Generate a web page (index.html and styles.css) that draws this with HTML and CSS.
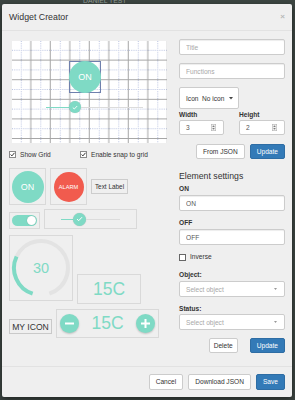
FILE: index.html
```html
<!DOCTYPE html>
<html>
<head>
<meta charset="utf-8">
<link rel="stylesheet" href="styles.css">
</head>
<body>
<div class="behind">DANIEL TEST</div>
<div class="modal">
  <div class="modal-header">
    <h4 class="title">Widget Creator</h4>
    <span class="close">×</span>
  </div>
  <div class="modal-body">
    <div class="col-left">
      <div class="canvas">
        <svg class="grid" width="155" height="102" viewBox="0 0 155 102">
          <defs>
            <pattern id="gp" width="19.5" height="19.6" patternUnits="userSpaceOnUse">
              <path d="M9.3 0V19.6M0 9.3H19.5" stroke="#b7c1e0" stroke-width="1" stroke-dasharray="1 1.2" fill="none"/>
              <path d="M18.8 0V19.6M0 19H19.5" stroke="#a6a6a6" stroke-width="1" fill="none"/>
            </pattern>
          </defs>
          <rect width="155" height="102" fill="url(#gp)"/>
        </svg>
        <div class="placed sel"><div class="circle teal on-big">ON</div></div>
        <div class="placed grid-slider">
          <div class="slider">
            <span class="fill f-grid"></span>
            <span class="knob"><svg width="6" height="5" viewBox="0 0 6 5"><path d="M0.8 2.6L2.3 4L5.2 1" stroke="#fff" stroke-width="0.9" fill="none"/></svg></span>
            <span class="rest"></span>
          </div>
        </div>
      </div>
      <div class="options">
        <label class="chk first"><span class="cbox"><svg width="7" height="7" viewBox="0 0 7 7"><rect x="0.5" y="0.5" width="6" height="6" fill="#fff" stroke="#8a8a8a"/><path d="M1.6 3.5L2.9 4.9L5.5 1.8" stroke="#333" stroke-width="1" fill="none"/></svg></span>Show Grid</label>
        <label class="chk"><span class="cbox"><svg width="7" height="7" viewBox="0 0 7 7"><rect x="0.5" y="0.5" width="6" height="6" fill="#fff" stroke="#8a8a8a"/><path d="M1.6 3.5L2.9 4.9L5.5 1.8" stroke="#333" stroke-width="1" fill="none"/></svg></span>Enable snap to grid</label>
      </div>
      <div class="palette">
        <div class="prow r1">
          <div class="cell sq"><div class="circle teal on-pal">ON</div></div>
          <div class="cell sq"><div class="circle red alarm">ALARM</div></div>
          <div class="cell text-label">Text Label</div>
        </div>
        <div class="prow r2">
          <div class="cell toggle-cell"><div class="toggle"><span class="tknob"></span></div></div>
          <div class="cell slider-cell">
            <div class="slider s-pal">
              <span class="fill f-pal"></span>
              <span class="knob big"><svg width="7" height="6" viewBox="0 0 7 6"><path d="M1 3.1L2.7 4.7L6 1.2" stroke="#fff" stroke-width="1" fill="none"/></svg></span>
              <span class="rest"></span>
            </div>
          </div>
        </div>
        <div class="prow r3">
          <div class="cell gauge">
            <svg width="62" height="64" viewBox="0 0 62 64">
              <path d="M6.57 20.5A27 27 0 1 1 39.34 57.68" stroke="#e3e3e3" stroke-width="4" fill="none"/>
              <path d="M22.66 57.68A27 27 0 0 1 6.57 20.5" stroke="#7fdac5" stroke-width="4" fill="none"/>
              <text x="31" y="37" text-anchor="middle" class="gauge-val">30</text>
            </svg>
          </div>
          <div class="cell temp">15C</div>
        </div>
        <div class="prow r4">
          <div class="cell my-icon">MY ICON</div>
          <div class="cell stepper">
            <span class="sbtn"><svg width="19" height="19" viewBox="0 0 19 19"><path d="M5 9.5H14" stroke="#fff" stroke-width="2"/></svg></span>
            <span class="sval">15C</span>
            <span class="sbtn"><svg width="19" height="19" viewBox="0 0 19 19"><path d="M5 9.5H14M9.5 5V14" stroke="#fff" stroke-width="2"/></svg></span>
          </div>
        </div>
      </div>
    </div>
    <div class="col-right">
      <input class="form-control" placeholder="Title">
      <input class="form-control gap8" placeholder="Functions">
      <div class="dropdown gap8"><span>Icon</span><span class="dd-val">No icon</span><svg class="caret" width="4" height="3" viewBox="0 0 4 3"><path d="M0 0H4L2 2.4Z" fill="#444"/></svg></div>
      <div class="wh">
        <div class="fg w45">
          <span class="lbl">Width</span>
          <div class="num"><span>3</span><svg width="5" height="7" viewBox="0 0 5 7"><rect x="0.25" y="0.25" width="4.5" height="6.5" fill="#eee" stroke="#aaa" stroke-width="0.5"/><path d="M1.2 2.8L2.5 1.4L3.8 2.8ZM1.2 4.2L2.5 5.6L3.8 4.2Z" fill="#555"/></svg></div>
        </div>
        <div class="fg w46">
          <span class="lbl">Height</span>
          <div class="num"><span>2</span><svg width="5" height="7" viewBox="0 0 5 7"><rect x="0.25" y="0.25" width="4.5" height="6.5" fill="#eee" stroke="#aaa" stroke-width="0.5"/><path d="M1.2 2.8L2.5 1.4L3.8 2.8ZM1.2 4.2L2.5 5.6L3.8 4.2Z" fill="#555"/></svg></div>
        </div>
      </div>
      <div class="btns top-btns">
        <button class="btn">From JSON</button>
        <button class="btn primary">Update</button>
      </div>
      <div class="section">Element settings</div>
      <span class="lbl l-on">ON</span>
      <input class="form-control gap2" value="ON">
      <span class="lbl gap8">OFF</span>
      <input class="form-control gap2" value="OFF">
      <label class="chk inverse"><span class="cbox"><svg width="7" height="7" viewBox="0 0 7 7"><rect x="0.5" y="0.5" width="6" height="6" fill="#fff" stroke="#666"/></svg></span>Inverse</label>
      <span class="lbl l-obj">Object:</span>
      <div class="select gap2"><span class="ph">Select object</span><svg width="3" height="2" viewBox="0 0 3 2"><path d="M0 0H3L1.5 2Z" fill="#999"/></svg></div>
      <span class="lbl gap8">Status:</span>
      <div class="select gap1"><span class="ph">Select object</span><svg width="3" height="2" viewBox="0 0 3 2"><path d="M0 0H3L1.5 2Z" fill="#999"/></svg></div>
      <div class="btns bottom-btns">
        <button class="btn delete">Delete</button>
        <button class="btn primary">Update</button>
      </div>
    </div>
  </div>
  <div class="modal-footer">
    <button class="btn foot">Cancel</button>
    <button class="btn foot">Download JSON</button>
    <button class="btn foot primary">Save</button>
  </div>
</div>
</body>
</html>
```
FILE: styles.css
```css
* { box-sizing: border-box; }
html, body { margin: 0; padding: 0; }
body {
  width: 295px;
  height: 400px;
  overflow: hidden;
  position: relative;
  background: #3d4642;
  font-family: "Liberation Sans", Arial, sans-serif;
}
.behind {
  position: absolute;
  top: -2.75px;
  left: 83px;
  font-size: 6.8px;
  line-height: 8px;
  color: #98a29e;
}
.modal {
  position: relative;
  margin: 4px 3px 0 2px;
  width: 290px;
  height: 393px;
  background: #efefef;
  border-radius: 2px;
  box-shadow: 0 2px 6px rgba(0, 0, 0, 0.5);
  display: flex;
  flex-direction: column;
  color: #333;
  font-size: 6.6px;
}
.modal-header {
  height: 27px;
  flex: none;
  border-bottom: 1px solid #e2e2e2;
  display: flex;
  align-items: center;
  justify-content: space-between;
  padding: 0 7px;
}
.title {
  margin: 0;
  font-size: 8.8px;
  font-weight: normal;
  line-height: 10px;
  color: #333;
}
.close {
  font-size: 8px;
  font-weight: bold;
  color: #b8b8b8;
  line-height: 8px;
}
.modal-body {
  height: 335px;
  flex: none;
  display: flex;
  padding: 8px 7px 0 7px;
}
.col-left {
  width: 161px;
  display: flex;
  flex-direction: column;
}
.canvas {
  position: relative;
  width: 155px;
  height: 102px;
  margin: 2px 0 0 3px;
  background: #fff;
}
.grid { display: block; }
.placed { position: absolute; }
.sel {
  left: 57px;
  top: 20px;
  width: 32px;
  height: 32px;
  border: 1px solid #6f80ad;
}
.circle {
  border-radius: 50%;
  display: flex;
  align-items: center;
  justify-content: center;
  color: #fff;
  flex: none;
}
.teal { background: #7fdac5; }
.red { background: #f15b4e; }
.on-big {
  width: 32px;
  height: 32px;
  margin: -1px 0 0 -1px;
  font-size: 9px;
}
.grid-slider {
  left: 34px;
  top: 60px;
  width: 97px;
}
.slider {
  display: flex;
  align-items: center;
  height: 12px;
}
.fill { height: 1px; background: #7fdac5; flex: none; }
.rest { height: 1px; background: #dcdcdc; flex: 1; }
.f-grid { width: 23px; }
.knob {
  width: 12px;
  height: 12px;
  border-radius: 50%;
  background: #7fdac5;
  display: flex;
  align-items: center;
  justify-content: center;
  flex: none;
  box-shadow: 0 0 1px rgba(0, 0, 0, 0.25);
}
.knob svg { display: block; }
.knob.big { width: 13px; height: 13px; }
.options {
  display: flex;
  align-items: center;
  height: 9px;
  margin-top: 7px;
}
.chk {
  display: flex;
  align-items: center;
  gap: 4px;
  font-size: 6.6px;
  line-height: 8px;
}
.chk.first { width: 71px; }
.cbox { display: flex; }
.cbox svg { display: block; }
.palette {
  margin-top: 9px;
  display: flex;
  flex-direction: column;
}
.prow { display: flex; gap: 4px; }
.r1 { align-items: center; }
.r2 { align-items: flex-end; margin-top: 4px; }
.r3 { align-items: flex-start; margin-top: 6px; }
.r4 { align-items: flex-start; margin-top: 5px; }
.cell {
  border: 1px solid #d9d9d9;
  display: flex;
  align-items: center;
  justify-content: center;
  flex: none;
}
.sq { width: 37px; height: 37px; }
.on-pal { width: 32px; height: 32px; font-size: 9px; }
.alarm { width: 30px; height: 30px; font-size: 5.6px; }
.text-label {
  width: 37px;
  height: 15px;
  font-size: 6.4px;
  border-color: #cdcdcd;
  color: #333;
}
.toggle-cell {
  width: 31px;
  height: 17px;
}
.toggle {
  width: 25px;
  height: 11px;
  border-radius: 6px;
  background: #7fdac5;
  display: flex;
  align-items: center;
  justify-content: flex-end;
  padding-right: 1px;
}
.tknob {
  width: 9px;
  height: 9px;
  border-radius: 50%;
  background: #fff;
  box-shadow: 0 0 1px rgba(0, 0, 0, 0.3);
}
.slider-cell {
  width: 93px;
  height: 20px;
  justify-content: flex-start;
  padding-left: 16px;
}
.s-pal { width: 59px; height: 13px; }
.f-pal { width: 11.5px; }
.gauge { width: 64px; height: 66px; }
.gauge svg { display: block; }
.gauge-val {
  font-family: "Liberation Sans", Arial, sans-serif;
  font-size: 14.5px;
  fill: #7fdac5;
}
.temp {
  width: 64px;
  height: 30px;
  margin-top: 39px;
  font-size: 17.5px;
  color: #7fdac5;
}
.my-icon {
  width: 43px;
  height: 15px;
  margin-top: 10px;
  font-size: 8.6px;
  border-color: #c9c9c9;
  color: #333;
}
.stepper {
  width: 103px;
  height: 29px;
  justify-content: space-between;
  padding: 0 2.5px;
}
.sbtn {
  width: 19px;
  height: 19px;
  border-radius: 50%;
  background: #7fdac5;
  box-shadow: 0 1px 2px rgba(0, 0, 0, 0.2);
  display: flex;
}
.sbtn svg { display: block; }
.sval { font-size: 17.5px; color: #7fdac5; }
.col-right {
  margin-left: auto;
  width: 106px;
  display: flex;
  flex-direction: column;
}
.form-control {
  display: block;
  width: 100%;
  height: 16px;
  margin: 0;
  padding: 0 6px;
  border: 1px solid #cccccc;
  border-radius: 2px;
  background: #fff;
  box-shadow: inset 0 1px 1px rgba(0, 0, 0, 0.075);
  font-family: "Liberation Sans", Arial, sans-serif;
  font-size: 6.6px;
  color: #555;
  outline: none;
}
.form-control::placeholder { color: #a8a8a8; }
.gap8 { margin-top: 8px; }
.gap2 { margin-top: 2px; }
.gap1 { margin-top: 1px; }
.dropdown {
  width: 60px;
  height: 22px;
  border: 1px solid #cccccc;
  border-radius: 2px;
  background: #fff;
  display: flex;
  align-items: center;
  padding-left: 6px;
  font-size: 6.6px;
  color: #333;
}
.dd-val { margin-left: 3.5px; }
.caret { margin-left: 5px; display: block; }
.wh {
  display: flex;
  gap: 15px;
  margin-top: 2px;
}
.fg { display: flex; flex-direction: column; }
.w45 { width: 45px; }
.w46 { width: 46px; }
.lbl {
  font-weight: bold;
  font-size: 6.6px;
  line-height: 8px;
  color: #333;
}
.num {
  margin-top: 1px;
  height: 15px;
  border: 1px solid #cccccc;
  border-radius: 2px;
  background: #fff;
  display: flex;
  align-items: center;
  justify-content: space-between;
  padding: 0 7px 0 6px;
  color: #555;
}
.num svg { display: block; }
.btns {
  display: flex;
  justify-content: flex-end;
  gap: 5px;
}
.top-btns { margin-top: 9px; }
.bottom-btns { margin-top: 8px; gap: 12px; }
.btn {
  height: 15px;
  margin: 0;
  padding: 0 6px;
  border: 1px solid #cccccc;
  border-radius: 2px;
  background: #fff;
  color: #333;
  font-family: "Liberation Sans", Arial, sans-serif;
  font-size: 6.6px;
  line-height: 8px;
  display: flex;
  align-items: center;
  justify-content: center;
}
.btn.primary {
  background: #337ab7;
  border-color: #2e6da4;
  color: #fff;
}
.btn.delete { padding: 0 4px; }
.section {
  margin-top: 12px;
  font-size: 8.7px;
  line-height: 11px;
  color: #333;
}
.l-on { margin-top: 3px; }
.inverse { margin-top: 8px; }
.l-obj { margin-top: 10px; }
.select {
  height: 16px;
  border: 1px solid #cccccc;
  border-radius: 2px;
  background: #fff;
  display: flex;
  align-items: center;
  justify-content: space-between;
  padding: 0 7px 0 6px;
}
.select svg { display: block; }
.ph { color: #a8a8a8; }
.modal-footer {
  flex: 1;
  border-top: 1px solid #e2e2e2;
  display: flex;
  justify-content: flex-end;
  align-items: flex-start;
  gap: 5px;
  padding: 7px 7px 0 7px;
}
.btn.foot { height: 16px; }
```
